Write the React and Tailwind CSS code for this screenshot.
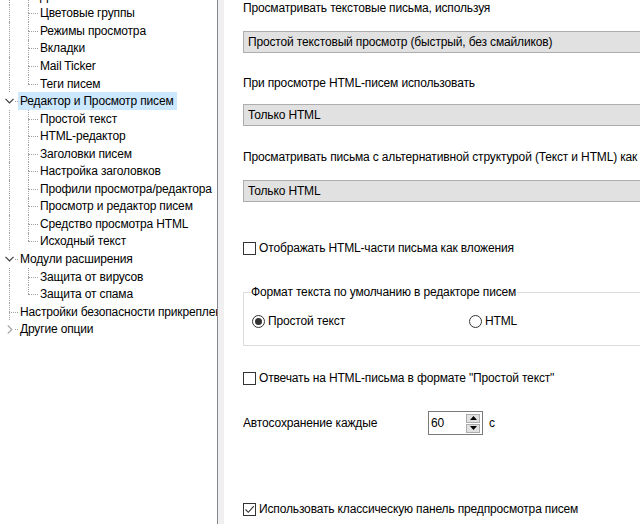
import React from "react";

// tree rows: level 0 = root, level 1 = child
const treeRows = [
  { level: 1, label: "Дополнительно" },
  { level: 1, label: "Цветовые группы" },
  { level: 1, label: "Режимы просмотра" },
  { level: 1, label: "Вкладки" },
  { level: 1, label: "Mail Ticker" },
  { level: 1, label: "Теги писем", last: true },
  { level: 0, label: "Редактор и Просмотр писем", expanded: true, selected: true },
  { level: 1, label: "Простой текст" },
  { level: 1, label: "HTML-редактор" },
  { level: 1, label: "Заголовки писем" },
  { level: 1, label: "Настройка заголовков" },
  { level: 1, label: "Профили просмотра/редактора" },
  { level: 1, label: "Просмотр и редактор писем" },
  { level: 1, label: "Средство просмотра HTML" },
  { level: 1, label: "Исходный текст", last: true },
  { level: 0, label: "Модули расширения", expanded: true },
  { level: 1, label: "Защита от вирусов" },
  { level: 1, label: "Защита от спама", last: true },
  { level: 0, label: "Настройки безопасности прикрепленных файлов" },
  { level: 0, label: "Другие опции", collapsed: true, last: true },
];

function ChevronDown() {
  return (
    <svg width="9" height="6" viewBox="0 0 9 6" className="block">
      <path d="M0.5 0.8 L4.5 4.8 L8.5 0.8" fill="none" stroke="#3c3c3c" strokeWidth="1.2" />
    </svg>
  );
}

function ChevronRight() {
  return (
    <svg width="6" height="9" viewBox="0 0 6 9" className="block">
      <path d="M0.8 0.5 L4.8 4.5 L0.8 8.5" fill="none" stroke="#a6a6a6" strokeWidth="1.2" />
    </svg>
  );
}

// one indent column with tree lines
function RootCell({ row }) {
  const hasButton = row.expanded || row.collapsed;
  return (
    <div className="relative w-[18px] h-full shrink-0">
      <div className="absolute left-[9px] top-0 h-1/2 border-l border-dotted border-[#a0a0a0]" />
      {!row.last && (
        <div className="absolute left-[9px] top-1/2 h-1/2 border-l border-dotted border-[#a0a0a0]" />
      )}
      {hasButton ? (
        <div className="absolute inset-0 flex items-center justify-center bg-white">
          <div className="pl-[1px] flex items-center">
            {row.expanded ? <ChevronDown /> : <ChevronRight />}
          </div>
          <div className="absolute left-[15px] top-1/2 w-[3px] border-t border-dotted border-[#a0a0a0]" />
        </div>
      ) : (
        <div className="absolute left-[9px] top-1/2 w-[9px] border-t border-dotted border-[#a0a0a0]" />
      )}
    </div>
  );
}

function TreeRow({ row }) {
  return (
    <div className="flex h-[17.56px] items-stretch whitespace-nowrap">
      {row.level === 0 ? (
        <RootCell row={row} />
      ) : (
        <>
          <div className="relative w-[18px] shrink-0">
            <div className="absolute left-[9px] top-0 h-full border-l border-dotted border-[#a0a0a0]" />
          </div>
          <div className="relative w-[19px] shrink-0">
            <div className="absolute left-[10px] top-0 h-1/2 border-l border-dotted border-[#a0a0a0]" />
            {!row.last && (
              <div className="absolute left-[10px] top-1/2 h-1/2 border-l border-dotted border-[#a0a0a0]" />
            )}
            <div className="absolute left-[10px] top-1/2 w-[10px] border-t border-dotted border-[#a0a0a0]" />
          </div>
        </>
      )}
      <div
        className={`flex items-center pl-[2px] pr-[3px] ${
          row.selected ? "bg-[#cce8ff]" : ""
        } ${row.level === 1 ? "pl-[3px]" : ""}`}
      >
        {row.label}
      </div>
    </div>
  );
}

function Dropdown({ value }) {
  return (
    <div className="h-[22px] w-[420px] bg-[#e1e1e1] border border-[#adadad] flex items-center pl-[4px]">
      {value}
    </div>
  );
}

function Checkbox({ checked, label }) {
  return (
    <div className="flex items-center h-[16px]">
      <div className="w-[13px] h-[13px] border border-[#333333] bg-white flex items-center justify-center shrink-0">
        {checked && (
          <svg width="11" height="11" viewBox="0 0 11 11">
            <path d="M1.5 5.5 L4.3 8.3 L9.8 2.2" fill="none" stroke="#333333" strokeWidth="1.1" />
          </svg>
        )}
      </div>
      <span className="ml-[3px]">{label}</span>
    </div>
  );
}

function Radio({ checked, label }) {
  return (
    <div className="flex items-center">
      <div className="w-[13px] h-[13px] rounded-full border border-[#333333] bg-white flex items-center justify-center shrink-0">
        {checked && <div className="w-[7px] h-[7px] rounded-full bg-[#333333]" />}
      </div>
      <span className="ml-[3px]">{label}</span>
    </div>
  );
}

export default function App() {
  return (
    <div
      className="w-[640px] h-[524px] overflow-hidden flex bg-white text-black text-[12px] leading-[16px] tracking-[-0.15px]"
      style={{ fontFamily: '"Liberation Sans", Arial, sans-serif' }}
    >
      {/* tree panel */}
      <div className="w-[218px] h-full overflow-hidden border-r border-[#828790] shrink-0">
        <div className="-mt-[13px]">
          {treeRows.map((row, i) => (
            <TreeRow key={i} row={row} />
          ))}
        </div>
      </div>

      {/* splitter */}
      <div className="w-[6px] h-full bg-[#f0f0f0] shrink-0" />

      {/* settings panel */}
      <div className="flex-1 h-full overflow-hidden pl-[19px]">
        <div className="h-[16px]">Просматривать текстовые письма, используя</div>
        <div className="mt-[15px]">
          <Dropdown value="Простой текстовый просмотр (быстрый, без смайликов)" />
        </div>

        <div className="mt-[22px] h-[16px]">При просмотре HTML-писем использовать</div>
        <div className="mt-[13px]">
          <Dropdown value="Только HTML" />
        </div>

        <div className="mt-[23px] h-[16px] whitespace-nowrap">
          Просматривать письма с альтернативной структурой (Текст и HTML) как
        </div>
        <div className="mt-[15px]">
          <Dropdown value="Только HTML" />
        </div>

        <div className="mt-[38px]">
          <Checkbox label="Отображать HTML-части письма как вложения" />
        </div>

        {/* group box */}
        <div className="mt-[36px] relative border border-[#dcdcdc] h-[54px] w-[420px]">
          <div className="absolute left-[7px] -top-[9px] bg-white pr-[1px] whitespace-nowrap">
            Формат текста по умолчанию в редакторе писем
          </div>
          <div className="flex items-center pt-[20px] pl-[8px]">
            <div className="w-[217px]">
              <Radio checked label="Простой текст" />
            </div>
            <Radio label="HTML" />
          </div>
        </div>

        <div className="mt-[24px]">
          <Checkbox label={"Отвечать на HTML-письма в формате \"Простой текст\""} />
        </div>

        <div className="mt-[25px] flex items-center h-[24px]">
          <div className="w-[185px]">Автосохранение каждые</div>
          <div className="w-[55px] h-[24px] border border-[#7a7a7a] bg-white flex items-center justify-between pl-[2px] pr-[2px]">
            <span>60</span>
            <div className="flex flex-col gap-[1px]">
              <div className="w-[14px] h-[9px] bg-[#e1e1e1] border border-[#adadad] flex items-center justify-center">
                <svg width="7" height="4" viewBox="0 0 7 4">
                  <path d="M0 4 L3.5 0 L7 4 Z" fill="#000" />
                </svg>
              </div>
              <div className="w-[14px] h-[9px] bg-[#e1e1e1] border border-[#adadad] flex items-center justify-center">
                <svg width="7" height="4" viewBox="0 0 7 4">
                  <path d="M0 0 L3.5 4 L7 0 Z" fill="#000" />
                </svg>
              </div>
            </div>
          </div>
          <span className="ml-[6px]">с</span>
        </div>

        <div className="mt-[66px]">
          <Checkbox checked label="Использовать классическую панель предпросмотра писем" />
        </div>
      </div>
    </div>
  );
}
